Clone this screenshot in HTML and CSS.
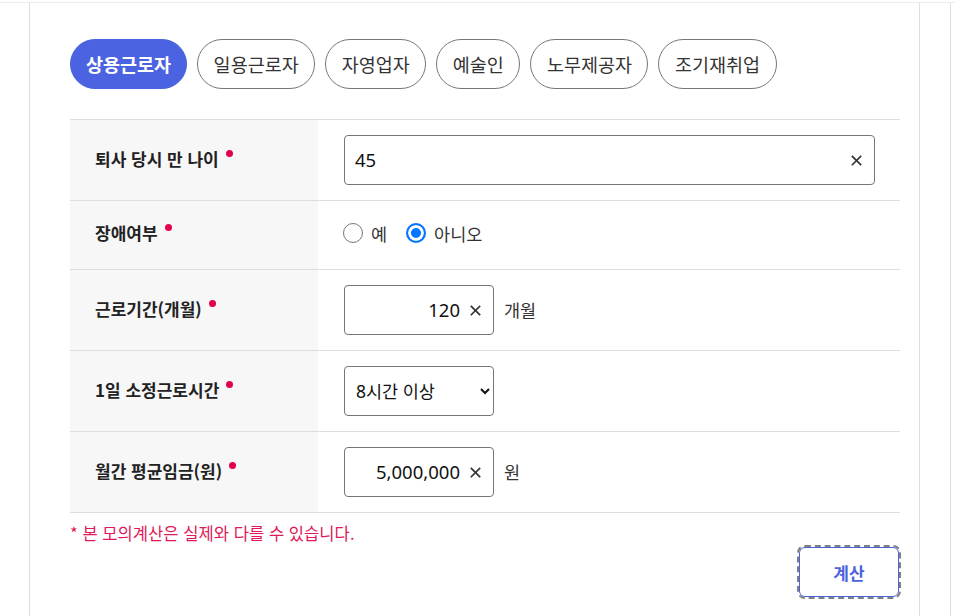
FILE: index.html
```html
<!DOCTYPE html>
<html lang="ko">
<head>
<meta charset="utf-8">
<title>실업급여 모의계산</title>
<link rel="stylesheet" href="styles.css">
</head>
<body>
<div class="page">
  <div class="card">
    <div class="tabs">
      <button class="tab active">상용근로자</button>
      <button class="tab">일용근로자</button>
      <button class="tab">자영업자</button>
      <button class="tab">예술인</button>
      <button class="tab">노무제공자</button>
      <button class="tab">조기재취업</button>
    </div>
    <div class="form">
      <div class="row">
        <div class="label"><span class="req">퇴사 당시 만 나이</span></div>
        <div class="value">
          <div class="field wide">
            <input class="inp" type="text" value="45">
            <svg class="clear" viewBox="0 0 12 12" width="11" height="11"><path d="M1.5 1.5L10.5 10.5M10.5 1.5L1.5 10.5" stroke="#333" stroke-width="1.8" stroke-linecap="square"/></svg>
          </div>
        </div>
      </div>
      <div class="row radio-row">
        <div class="label"><span class="req">장애여부</span></div>
        <div class="value">
          <label class="opt"><input type="radio" name="dis" class="radio"><span>예</span></label>
          <label class="opt"><input type="radio" name="dis" class="radio" checked><span>아니오</span></label>
        </div>
      </div>
      <div class="row">
        <div class="label"><span class="req">근로기간(개월)</span></div>
        <div class="value">
          <div class="field short">
            <input class="inp right" type="text" value="120">
            <svg class="clear" viewBox="0 0 12 12" width="11" height="11"><path d="M1.5 1.5L10.5 10.5M10.5 1.5L1.5 10.5" stroke="#333" stroke-width="1.8" stroke-linecap="square"/></svg>
          </div>
          <span class="unit">개월</span>
        </div>
      </div>
      <div class="row">
        <div class="label"><span class="req">1일 소정근로시간</span></div>
        <div class="value">
          <select class="sel">
            <option>8시간 이상</option>
            <option>7시간</option>
            <option>6시간</option>
          </select>
        </div>
      </div>
      <div class="row">
        <div class="label"><span class="req">월간 평균임금(원)</span></div>
        <div class="value">
          <div class="field short">
            <input class="inp right" type="text" value="5,000,000">
            <svg class="clear" viewBox="0 0 12 12" width="11" height="11"><path d="M1.5 1.5L10.5 10.5M10.5 1.5L1.5 10.5" stroke="#333" stroke-width="1.8" stroke-linecap="square"/></svg>
          </div>
          <span class="unit">원</span>
        </div>
      </div>
    </div>
    <p class="note">* 본 모의계산은 실제와 다를 수 있습니다.</p>
    <div class="actions">
      <button class="calc">계산</button>
    </div>
  </div>
  <div class="side"></div>
</div>
</body>
</html>
```
FILE: styles.css
```css
* { box-sizing: border-box; }
html, body {
  margin: 0;
  padding: 0;
  background: #fff;
}
body {
  font-family: "Noto Sans CJK KR", "Noto Sans", sans-serif;
  color: #222;
  overflow: hidden;
}
.page {
  margin-top: 2px;
  border-top: 1px solid #ececec;
  display: flex;
  height: 620px;
}
.card {
  margin-left: 29px;
  width: 891px;
  border-left: 1px solid #dedede;
  border-right: 1px solid #dedede;
  padding: 36px 19px 0 40px;
}
.side {
  width: 31px;
  border-right: 1px solid #dedede;
}
.tabs {
  display: flex;
  gap: 10px;
}
.tab {
  height: 50px;
  padding: 0 15.5px;
  border: 1px solid #777;
  border-radius: 25px;
  background: #fff;
  color: #333;
  font-family: "Noto Sans CJK KR", sans-serif;
  font-size: 18.5px;
  font-weight: 400;
  line-height: 1;
}
.tab.active {
  padding: 0 15px;
  background: #4b63e1;
  border-color: #4b63e1;
  color: #fff;
  font-weight: 700;
}
.form {
  margin-top: 30px;
  border-top: 1px solid #dedede;
}
.row {
  display: grid;
  grid-template-columns: 248px 1fr;
  border-bottom: 1px solid #dedede;
}
.label {
  background: #f7f7f7;
  padding: 0 0 3px 25px;
  display: flex;
  align-items: center;
  font-size: 17px;
  font-weight: 700;
  color: #222;
}
.radio-row .label {
  padding-bottom: 5px;
}
.req::after {
  content: "";
  display: inline-block;
  width: 7px;
  height: 7px;
  border-radius: 50%;
  background: #e3004f;
  margin-left: 7px;
  vertical-align: 9px;
}
.value {
  padding: 15px 0 15px 26px;
  display: flex;
  align-items: center;
  min-height: 80px;
}
.radio-row .value {
  min-height: 68px;
  padding: 0 0 4px 25px;
}
.field {
  height: 50px;
  border: 1px solid #767676;
  border-radius: 4px;
  display: flex;
  align-items: center;
  background: #fff;
}
.field.wide { width: 531px; }
.field.short { width: 150px; }
.inp {
  flex: 1;
  min-width: 0;
  border: 0;
  outline: 0;
  padding: 0 0 1px 10px;
  font-family: "Noto Sans", "Noto Sans CJK KR", sans-serif;
  font-size: 18.5px;
  color: #111;
  background: transparent;
}
.inp.right {
  text-align: right;
}
.clear {
  flex: none;
  margin: 0 12px 0 10px;
}
.unit {
  margin-left: 10px;
  margin-bottom: 2px;
  font-size: 17.5px;
  color: #333;
}
.opt {
  display: flex;
  align-items: center;
  gap: 8px;
  margin-right: 19px;
  font-size: 17.5px;
  color: #333;
}
.radio {
  appearance: none;
  -webkit-appearance: none;
  margin: 0;
  width: 20px;
  height: 20px;
  border: 1px solid #767676;
  border-radius: 50%;
  background: #fff;
}
.radio:checked {
  border: 2px solid #0075ff;
  background: #0075ff;
  box-shadow: inset 0 0 0 3px #fff;
}
.sel {
  width: 150px;
  height: 50px;
  border: 1px solid #767676;
  border-radius: 4px;
  padding: 0 6px 0 7px;
  font-family: "Noto Sans", "Noto Sans CJK KR", sans-serif;
  font-size: 17.5px;
  color: #111;
  background: #fff;
}
.note {
  margin: 8px 0 0;
  line-height: 24px;
  font-size: 16.6px;
  color: #e0195a;
}
.actions {
  display: flex;
  justify-content: flex-end;
  margin-top: 2px;
}
.calc {
  width: 100px;
  height: 50px;
  margin-right: 1px;
  border: 1px solid #4b63e1;
  border-radius: 6px;
  outline: 2px dashed #808080;
  outline-offset: 0;
  background: #fff;
  color: #4b63e1;
  font-family: "Noto Sans CJK KR", sans-serif;
  font-size: 17px;
  font-weight: 700;
}
```
